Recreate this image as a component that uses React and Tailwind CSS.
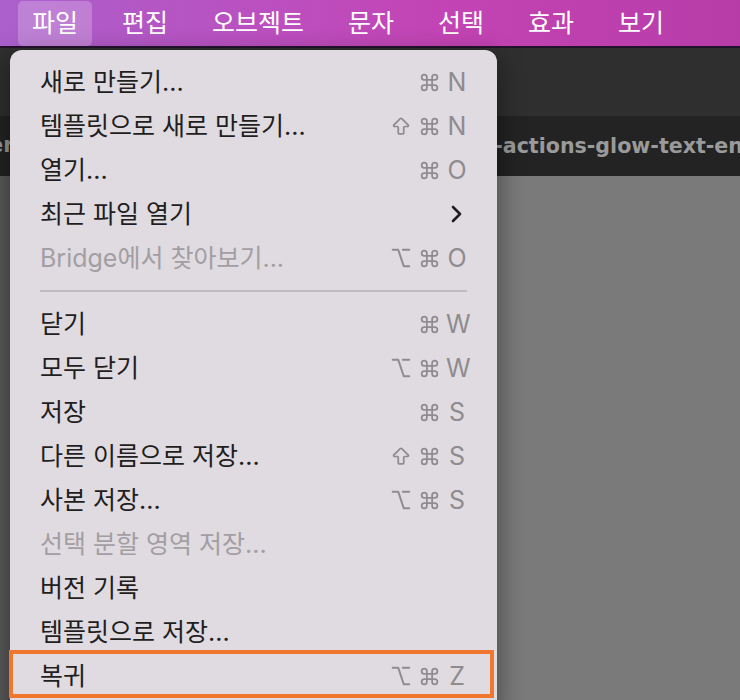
import React from "react";
import { Command, ArrowBigUp, Option } from "lucide-react";

const KR = { fontFamily: '"Inter", "Noto Sans CJK KR", sans-serif' };
const SYM = { fontFamily: '"DejaVu Sans", "Noto Sans", sans-serif' };

function Mod({ m }) {
  const cls = "w-[22px] h-[22px] flex items-center justify-center";
  if (m === "cmd")
    return (
      <span className={cls}>
        <Command size={21} strokeWidth={2} />
      </span>
    );
  if (m === "shift")
    return (
      <span className={cls}>
        <ArrowBigUp size={25} strokeWidth={1.9} />
      </span>
    );
  return (
    <span className={cls}>
      <Option size={22} strokeWidth={2.2} />
    </span>
  );
}

function Shortcut({ mods = [], k }) {
  return (
    <div className="flex items-center gap-[6px] text-[#8f8b8f]">
      {mods.map((m, i) => (
        <Mod key={i} m={m} />
      ))}
      <span className="w-[22px] text-center text-[25px] leading-none" style={KR}>
        {k}
      </span>
    </div>
  );
}

function Row({ label, disabled, mods, k, chevron }) {
  return (
    <div className="h-[44px] flex items-center justify-between pl-[30px] pr-[29px]">
      <span
        className={`text-[25px] leading-none ${disabled ? "text-[#a29ea3]" : "text-[#1f1e20]"}`}
        style={KR}
      >
        {label}
      </span>
      {chevron ? (
        <svg width="14" height="20" viewBox="0 0 14 20" className="mr-[4px]">
          <path d="M3 3 L10 10 L3 17" fill="none" stroke="#1f1e20" strokeWidth="2.6" strokeLinecap="round" strokeLinejoin="round" />
        </svg>
      ) : k ? (
        <Shortcut mods={mods} k={k} />
      ) : null}
    </div>
  );
}

export default function App() {
  const menus = ["파일", "편집", "오브젝트", "문자", "선택", "효과", "보기"];
  return (
    <div className="relative w-[740px] h-[700px] overflow-hidden bg-[#7a7a7a] flex flex-col" style={KR}>
      {/* menu bar */}
      <div className="h-[48px] shrink-0 flex items-center pl-[18px] gap-[16px] bg-[linear-gradient(90deg,#aa60cc_0%,#bb50c0_35%,#c344b4_60%,#b73ca8_100%)] border-b-[2px] border-[#24122c]">
        {menus.map((m, i) => (
          <div
            key={m}
            className={`h-[45px] flex items-center px-[14px] rounded-[5px] text-white text-[25px] leading-none ${i === 0 ? "bg-[#ffffff38]" : ""}`}
          >
            {m}
          </div>
        ))}
      </div>
      {/* toolbar */}
      <div className="h-[68px] shrink-0 bg-[#2f2f2f]" />
      {/* tab bar */}
      <div className="h-[60px] shrink-0 bg-[#232323] flex items-center justify-between overflow-hidden">
        <span className="ml-[-11px] text-[#9a9a9a] text-[21px] font-bold" style={SYM}>er</span>
        <span className="mr-[-3px] text-[#9a9a9a] text-[20.6px] font-bold whitespace-nowrap" style={SYM}>
          -actions-glow-text-en
        </span>
      </div>
      {/* canvas */}
      <div className="flex-1 bg-[#7a7a7a] flex">
        <div className="w-[14px] bg-[#5a5a5a]" />
      </div>

      {/* dropdown menu */}
      <div className="absolute left-[10px] top-[50px] w-[487px] h-[670px] rounded-[12px] bg-[#e0dbe0] pt-[10px] shadow-[0_8px_28px_rgba(0,0,0,0.45)]">
        <Row label="새로 만들기..." mods={["cmd"]} k="N" />
        <Row label="템플릿으로 새로 만들기..." mods={["shift", "cmd"]} k="N" />
        <Row label="열기..." mods={["cmd"]} k="O" />
        <Row label="최근 파일 열기" chevron />
        <Row label="Bridge에서 찾아보기..." disabled mods={["opt", "cmd"]} k="O" />
        <div className="py-[10px] px-[30px]">
          <div className="h-[2px] bg-[#bfbbc0]" />
        </div>
        <Row label="닫기" mods={["cmd"]} k="W" />
        <Row label="모두 닫기" mods={["opt", "cmd"]} k="W" />
        <Row label="저장" mods={["cmd"]} k="S" />
        <Row label="다른 이름으로 저장..." mods={["shift", "cmd"]} k="S" />
        <Row label="사본 저장..." mods={["opt", "cmd"]} k="S" />
        <Row label="선택 분할 영역 저장..." disabled />
        <Row label="버전 기록" />
        <Row label="템플릿으로 저장..." />
        <Row label="복귀" mods={["opt", "cmd"]} k="Z" />
      </div>

      {/* orange highlight */}
      <div className="absolute left-[9px] top-[650px] w-[485px] h-[48px] border-[4px] border-[#f0782e]" />
    </div>
  );
}
